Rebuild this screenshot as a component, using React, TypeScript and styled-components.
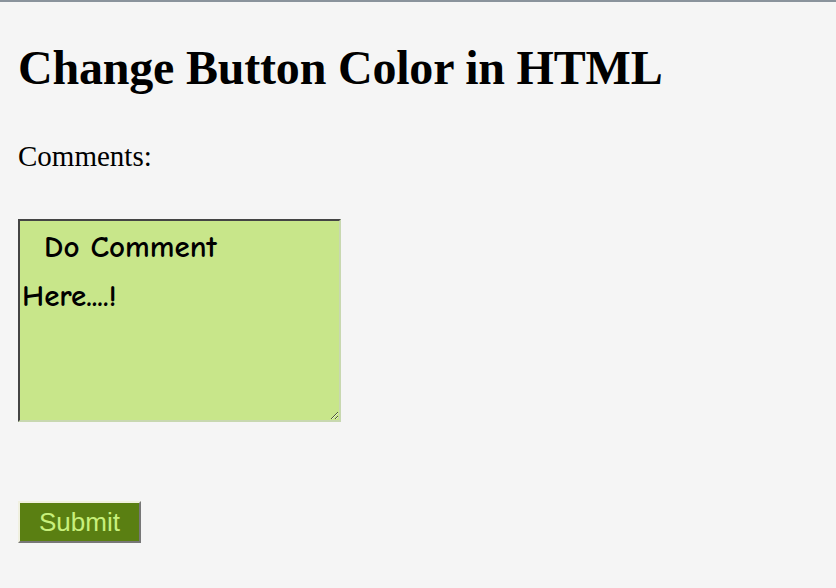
import React from "react";
import styled, { createGlobalStyle } from "styled-components";

const GlobalStyle = createGlobalStyle`
  html, body {
    margin: 0;
    padding: 0;
    background: #f5f5f5;
  }
  body {
    font-family: "Liberation Serif", "Times New Roman", serif;
    color: #000;
  }
`;

const Page = styled.div`
  min-height: 588px;
  border-top: 2px solid #8a939c;
  padding: 0 18px;
  box-sizing: border-box;
`;

const Title = styled.h1`
  margin: 38px 0 0;
  font-size: 48px;
  line-height: 56px;
  font-weight: bold;
  letter-spacing: -0.2px;
`;

const Label = styled.p`
  margin: 43px 0 0;
  font-size: 29px;
  line-height: 34px;
`;

const CommentBox = styled.textarea`
  display: block;
  margin-top: 46px;
  width: 323px;
  height: 203px;
  box-sizing: border-box;
  background: #c8e68a;
  border: 2px solid;
  border-color: #444 #c8d8b0 #c8d8b0 #444;
  font-family: "Comic Sans MS", "Comic Neue", cursive;
  font-size: 31px;
  font-weight: bold;
  line-height: 49px;
  padding: 2px 2px 2px;
  resize: both;
  color: #000;
`;

const SubmitButton = styled.button`
  display: block;
  margin-top: 79px;
  width: 123px;
  height: 42px;
  background: #5a7f12;
  color: #c8f07c;
  font-family: "Liberation Sans", Arial, sans-serif;
  font-size: 26px;
  border: 2px solid;
  border-color: #f0f0e0 #777 #777 #f0f0e0;
  padding: 0;
`;

export default function App() {
  return (
    <Page>
      <GlobalStyle />
      <Title>Change Button Color in HTML</Title>
      <Label>Comments:</Label>
      <CommentBox defaultValue={"  Do Comment\nHere....!"} />
      <SubmitButton>Submit</SubmitButton>
    </Page>
  );
}
